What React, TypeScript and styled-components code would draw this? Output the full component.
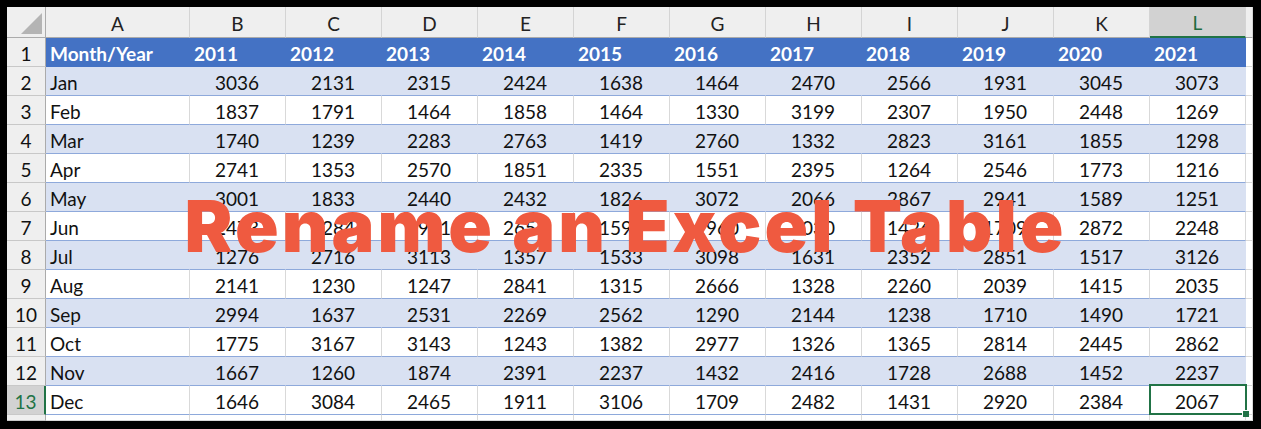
import styled, { createGlobalStyle } from 'styled-components'

const GlobalStyle = createGlobalStyle`
    html, body {
        margin: 0;
        padding: 0;
        background: #000;
    }
    body {
        padding: 7px 8px 8px 7px;
        width: 1261px;
        height: 429px;
        box-sizing: border-box;
        overflow: hidden;
    }
`

const COLS = ['A', 'B', 'C', 'D', 'E', 'F', 'G', 'H', 'I', 'J', 'K', 'L']
const YEARS = ['2011', '2012', '2013', '2014', '2015', '2016', '2017', '2018', '2019', '2020', '2021']

const DATA: [string, number[]][] = [
    ['Jan', [3036, 2131, 2315, 2424, 1638, 1464, 2470, 2566, 1931, 3045, 3073]],
    ['Feb', [1837, 1791, 1464, 1858, 1464, 1330, 3199, 2307, 1950, 2448, 1269]],
    ['Mar', [1740, 1239, 2283, 2763, 1419, 2760, 1332, 2823, 3161, 1855, 1298]],
    ['Apr', [2741, 1353, 2570, 1851, 2335, 1551, 2395, 1264, 2546, 1773, 1216]],
    ['May', [3001, 1833, 2440, 2432, 1826, 3072, 2066, 2867, 2941, 1589, 1251]],
    ['Jun', [2473, 2284, 1911, 2654, 1599, 1960, 2030, 1426, 1709, 2872, 2248]],
    ['Jul', [1276, 2716, 3113, 1357, 1533, 3098, 1631, 2352, 2851, 1517, 3126]],
    ['Aug', [2141, 1230, 1247, 2841, 1315, 2666, 1328, 2260, 2039, 1415, 2035]],
    ['Sep', [2994, 1637, 2531, 2269, 2562, 1290, 2144, 1238, 1710, 1490, 1721]],
    ['Oct', [1775, 3167, 3143, 1243, 1382, 2977, 1326, 1365, 2814, 2445, 2862]],
    ['Nov', [1667, 1260, 1874, 2391, 2237, 1432, 2416, 1728, 2688, 1452, 2237]],
    ['Dec', [1646, 3084, 2465, 1911, 3106, 1709, 2482, 1431, 2920, 2384, 2067]],
]

const Sheet = styled.div`
    position: relative;
    width: 1246px;
    height: 414px;
    overflow: hidden;
    background: #fff;
    display: grid;
    grid-template-columns: 39px 144px repeat(11, 96px) 1fr;
    grid-template-rows: 31px repeat(13, 29px) 1fr;
    font-family: Lato, 'Liberation Sans', sans-serif;
    font-size: 19px;
    color: #111;
`

const Corner = styled.div`
    background: #efefef;
    border-right: 1px solid #ababab;
    border-bottom: 1px solid #ababab;
    box-sizing: border-box;
    display: flex;
    align-items: flex-end;
    justify-content: flex-end;
    padding: 0 3px 3px 0;
    &::after {
        content: '';
        width: 0;
        height: 0;
        border-left: 21px solid transparent;
        border-bottom: 21px solid #b4b4b4;
    }
`

const ColHead = styled.div<{ $active?: boolean }>`
    box-sizing: border-box;
    display: flex;
    align-items: center;
    justify-content: center;
    padding-top: 2px;
    background: ${({ $active }) => ($active ? '#d2d2d2' : '#efefef')};
    color: ${({ $active }) => ($active ? '#1e6b40' : '#222')};
    border-right: 1px solid #d4d4d4;
    border-bottom: ${({ $active }) => ($active ? '2px solid #217346' : '1px solid #ababab')};
`

const RowHead = styled.div<{ $active?: boolean }>`
    box-sizing: border-box;
    display: flex;
    align-items: center;
    justify-content: center;
    padding-top: 2px;
    background: ${({ $active }) => ($active ? '#d2d2d2' : '#efefef')};
    color: ${({ $active }) => ($active ? '#217346' : '#111')};
    border-right: ${({ $active }) => ($active ? '2px solid #217346' : '1px solid #ababab')};
    border-bottom: 1px solid #c8c8c8;
`

const Cell = styled.div<{ $kind: 'head' | 'band' | 'plain' | 'empty'; $num?: boolean }>`
    box-sizing: border-box;
    display: flex;
    align-items: center;
    padding-top: 3px;
    white-space: nowrap;
    justify-content: ${({ $num }) => ($num ? 'flex-end' : 'flex-start')};
    padding-right: ${({ $num }) => ($num ? '26px' : '0')};
    padding-left: ${({ $num }) => ($num ? '0' : '4px')};
    background: ${({ $kind }) =>
        $kind === 'head' ? '#4472c4' : $kind === 'band' ? '#d9e1f2' : '#fff'};
    color: ${({ $kind }) => ($kind === 'head' ? '#fff' : '#111')};
    font-weight: ${({ $kind }) => ($kind === 'head' ? 700 : 400)};
    border-right: 1px solid
        ${({ $kind }) => ($kind === 'head' ? '#4472c4' : $kind === 'band' ? '#d9e1f2' : '#d9d9d9')};
    border-bottom: 1px solid
        ${({ $kind }) => ($kind === 'head' ? '#4472c4' : $kind === 'empty' ? '#d9d9d9' : '#8ea9db')};
`

const Selected = styled.div`
    position: relative;
    &::after {
        content: '';
        position: absolute;
        left: -1px;
        top: -2px;
        right: -2px;
        bottom: -1px;
        border: 2px solid #217346;
        pointer-events: none;
    }
    &::before {
        content: '';
        position: absolute;
        right: -4px;
        bottom: -3px;
        width: 6px;
        height: 6px;
        background: #217346;
        border-left: 1px solid #fff;
        border-top: 1px solid #fff;
        z-index: 2;
    }
`

// big caption laid over the sheet
const Title = styled.div`
    position: absolute;
    left: 0;
    right: 9px;
    top: 183px;
    text-align: center;
    font-family: Inter, 'Open Sans', sans-serif;
    font-weight: 900;
    font-size: 72px;
    line-height: 72px;
    letter-spacing: 3px;
    color: #ef5a40;
    white-space: nowrap;
    pointer-events: none;
`

export default function App() {
    return (
        <>
            <GlobalStyle />
            <Sheet>
                <Corner />
                {COLS.map((c) => (
                    <ColHead key={c} $active={c === 'L'}>
                        {c}
                    </ColHead>
                ))}
                <ColHead />

                <RowHead>1</RowHead>
                <Cell $kind="head">Month/Year</Cell>
                {YEARS.map((y) => (
                    <Cell key={y} $kind="head">
                        {y}
                    </Cell>
                ))}
                <Cell $kind="empty" />

                {DATA.map(([month, values], i) => {
                    const rowNo = i + 2
                    const kind = rowNo % 2 === 0 ? 'band' : 'plain'
                    const last = rowNo === 13
                    return [
                        <RowHead key={`h${rowNo}`} $active={last}>
                            {rowNo}
                        </RowHead>,
                        <Cell key={`m${rowNo}`} $kind={kind}>
                            {month}
                        </Cell>,
                        ...values.map((v, j) =>
                            last && j === values.length - 1 ? (
                                <Cell key={`v${rowNo}-${j}`} as={Selected} $kind={kind} $num>
                                    {v}
                                </Cell>
                            ) : (
                                <Cell key={`v${rowNo}-${j}`} $kind={kind} $num>
                                    {v}
                                </Cell>
                            )
                        ),
                        <Cell key={`e${rowNo}`} $kind="empty" />,
                    ]
                })}

                <RowHead />
                {COLS.map((c) => (
                    <Cell key={`r14${c}`} $kind="empty" />
                ))}
                <Cell $kind="empty" />

                <Title>Rename an Excel Table</Title>
            </Sheet>
        </>
    )
}
